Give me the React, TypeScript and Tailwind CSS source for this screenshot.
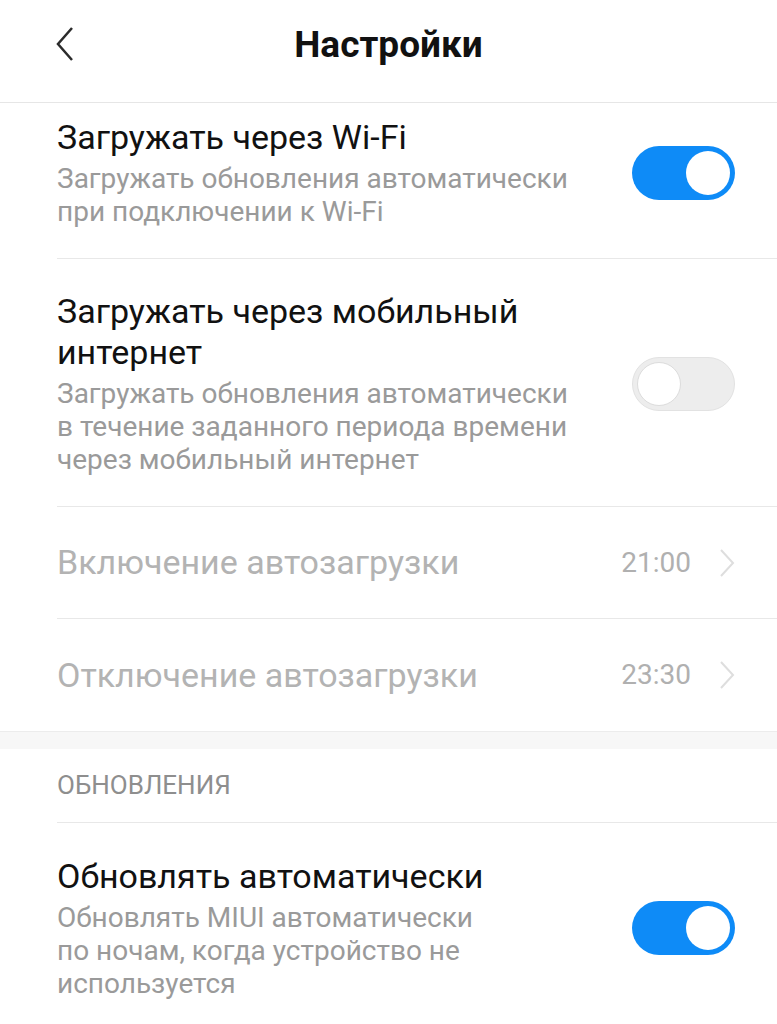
import React from "react";

function Toggle({ on }: { on: boolean }) {
  return on ? (
    <div className="flex h-[54px] w-[103px] shrink-0 items-center justify-end rounded-full bg-[#0e8bf7] px-[5px]">
      <div className="h-[44px] w-[44px] rounded-full bg-white" />
    </div>
  ) : (
    <div className="flex h-[54px] w-[103px] shrink-0 items-center rounded-full border border-[#e2e2e2] bg-[#ededed] px-[4px]">
      <div className="h-[44px] w-[44px] rounded-full border border-[#dcdcdc] bg-white" />
    </div>
  );
}

function Chevron() {
  return (
    <svg width="16" height="30" viewBox="0 0 16 30" className="shrink-0">
      <path d="M2 2 L14 15 L2 28" fill="none" stroke="#dedede" strokeWidth="2" />
    </svg>
  );
}

function ToggleRow({
  title,
  subtitle,
  on,
  border = true,
  pt,
}: {
  title: React.ReactNode;
  subtitle: React.ReactNode;
  on: boolean;
  border?: boolean;
  pt: string;
}) {
  return (
    <div className="pl-[57px]">
      <div
        className={`flex items-center justify-between pr-[42px] ${pt} pb-[30px] ${
          border ? "border-b border-[#e8e8e8]" : ""
        }`}
      >
        <div>
          <div className="text-[34px] leading-[41px] text-[#111]">{title}</div>
          <div className="mt-[4px] text-[28px] leading-[33px] text-[#9a9a9a]">{subtitle}</div>
        </div>
        <Toggle on={on} />
      </div>
    </div>
  );
}

function TimeRow({ title, time, border = true }: { title: string; time: string; border?: boolean }) {
  return (
    <div className="pl-[57px]">
      <div
        className={`flex h-[112px] items-center justify-between pr-[42px] ${
          border ? "border-b border-[#e8e8e8]" : ""
        }`}
      >
        <div className="text-[34px] leading-[41px] text-[#b3b3b3]">{title}</div>
        <div className="flex items-center gap-[28px]">
          <span className="text-[28px] leading-[34px] text-[#b0b0b0]">{time}</span>
          <Chevron />
        </div>
      </div>
    </div>
  );
}

export default function App() {
  return (
    <div
      className="h-[1024px] w-[777px] overflow-hidden bg-white"
      style={{ fontFamily: "Roboto, 'Noto Sans', sans-serif" }}
    >
      <div className="relative flex h-[103px] items-center justify-center border-b border-[#e6e6e6]">
        <svg width="20" height="36" viewBox="0 0 20 36" className="absolute left-[55px] top-[26px]">
          <path d="M17 2 L3 18 L17 34" fill="none" stroke="#2b2b2b" strokeWidth="2.5" />
        </svg>
        <h1 className="mt-[-12px] text-[37px] font-bold leading-[44px] text-[#111]">Настройки</h1>
      </div>

      <ToggleRow
        pt="pt-[14px]"
        on
        title="Загружать через Wi-Fi"
        subtitle={
          <>
            Загружать обновления автоматически
            <br />
            при подключении к Wi-Fi
          </>
        }
      />
      <ToggleRow
        pt="pt-[32px]"
        on={false}
        title={
          <>
            Загружать через мобильный
            <br />
            интернет
          </>
        }
        subtitle={
          <>
            Загружать обновления автоматически
            <br />
            в течение заданного периода времени
            <br />
            через мобильный интернет
          </>
        }
      />
      <TimeRow title="Включение автозагрузки" time="21:00" />
      <TimeRow title="Отключение автозагрузки" time="23:30" border={false} />

      <div className="h-[18px] border-t border-[#ececec] bg-[#f7f7f7]" />

      <div className="pl-[57px]">
        <div className="flex h-[74px] items-center border-b border-[#e8e8e8] text-[26px] text-[#8e8e8e]">
          ОБНОВЛЕНИЯ
        </div>
      </div>

      <ToggleRow
        pt="pt-[33px]"
        on
        border={false}
        title="Обновлять автоматически"
        subtitle={
          <>
            Обновлять MIUI автоматически
            <br />
            по ночам, когда устройство не
            <br />
            используется
          </>
        }
      />
    </div>
  );
}
